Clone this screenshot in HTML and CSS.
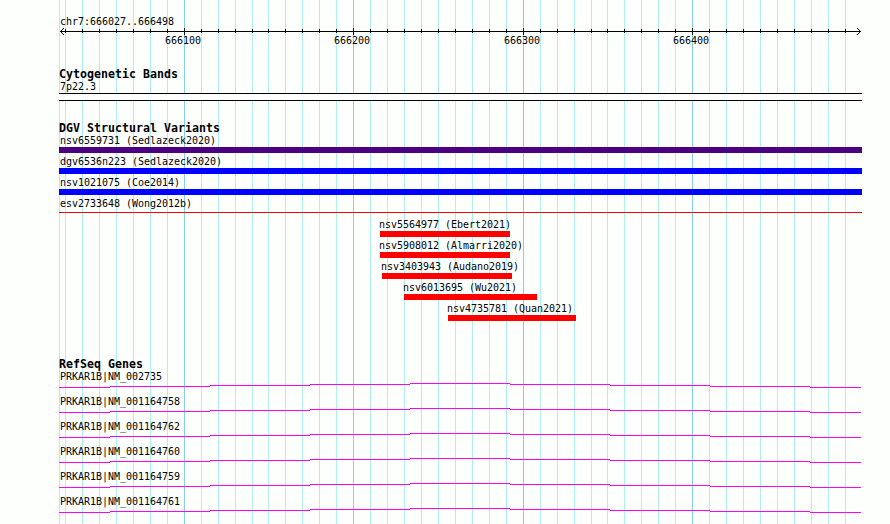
FILE: index.html
```
<!DOCTYPE html>
<html lang="en">
<head>
<meta charset="utf-8">
<title>chr7:666027..666498</title>
<link rel="stylesheet" href="styles.css">
</head>
<body>
<main class="browser">
  <svg class="grid" width="890" height="524" shape-rendering="crispEdges" aria-hidden="true">
    <path class="minor" d="M59.5 0V524M65.5 0V524M82.5 0V524M99.5 0V524M116.5 0V524M133.5 0V524M150.5 0V524M167.5 0V524M201.5 0V524M218.5 0V524M235.5 0V524M252.5 0V524M268.5 0V524M285.5 0V524M302.5 0V524M319.5 0V524M336.5 0V524M370.5 0V524M387.5 0V524M404.5 0V524M421.5 0V524M438.5 0V524M455.5 0V524M472.5 0V524M489.5 0V524M506.5 0V524M540.5 0V524M557.5 0V524M574.5 0V524M591.5 0V524M607.5 0V524M624.5 0V524M641.5 0V524M658.5 0V524M675.5 0V524M709.5 0V524M726.5 0V524M743.5 0V524M760.5 0V524M777.5 0V524M794.5 0V524M811.5 0V524M828.5 0V524M845.5 0V524"/>
    <path class="major" d="M184.5 0V524M353.5 0V524M523.5 0V524M692.5 0V524"/>
  </svg>

  <section class="ruler">
    <p class="label">chr7:666027..666498</p>
    <svg class="axis" width="803" height="7" shape-rendering="crispEdges" aria-hidden="true">
      <path d="M1 3.5H802M6.5 1V5M23.5 1V5M40.5 1V5M57.5 1V5M74.5 1V5M91.5 1V5M108.5 1V5M125.5 0V7M142.5 1V5M159.5 1V5M176.5 1V5M193.5 1V5M209.5 1V5M226.5 1V5M243.5 1V5M260.5 1V5M277.5 1V5M294.5 0V7M311.5 1V5M328.5 1V5M345.5 1V5M362.5 1V5M379.5 1V5M396.5 1V5M413.5 1V5M430.5 1V5M447.5 1V5M464.5 0V7M481.5 1V5M498.5 1V5M515.5 1V5M532.5 1V5M548.5 1V5M565.5 1V5M582.5 1V5M599.5 1V5M616.5 1V5M633.5 0V7M650.5 1V5M667.5 1V5M684.5 1V5M701.5 1V5M718.5 1V5M735.5 1V5M752.5 1V5M769.5 1V5M786.5 1V5"/>
      <path d="M1 3.5H2M2 2.5H3M3 1.5H4M4 0.5H5M2 4.5H3M3 5.5H4M4 6.5H5M801 3.5H802M800 2.5H801M799 1.5H800M798 0.5H799M800 4.5H801M799 5.5H800M798 6.5H799"/>
    </svg>
    <div class="scale"><span>666100</span><span>666200</span><span>666300</span><span>666400</span></div>
  </section>

  <section class="bands">
    <h2>Cytogenetic Bands</h2>
    <p class="label">7p22.3</p>
    <div class="band"></div>
  </section>

  <section class="variants">
    <h2>DGV Structural Variants</h2>
    <div class="variant indigo"><p class="label">nsv6559731 (Sedlazeck2020)</p><div class="bar"></div></div>
    <div class="variant blue"><p class="label">dgv6536n223 (Sedlazeck2020)</p><div class="bar"></div></div>
    <div class="variant blue"><p class="label">nsv1021075 (Coe2014)</p><div class="bar"></div></div>
    <div class="variant thin"><p class="label">esv2733648 (Wong2012b)</p><div class="bar"></div></div>
    <div class="variant inner" style="margin-left:321px;width:130px"><p class="label">nsv5564977 (Ebert2021)</p><div class="bar"></div></div>
    <div class="variant inner" style="margin-left:321px;width:130px"><p class="label">nsv5908012 (Almarri2020)</p><div class="bar"></div></div>
    <div class="variant inner" style="margin-left:323px;width:130px"><p class="label">nsv3403943 (Audano2019)</p><div class="bar"></div></div>
    <div class="variant inner" style="margin-left:345px;width:133px"><p class="label">nsv6013695 (Wu2021)</p><div class="bar"></div></div>
    <div class="variant inner" style="margin-left:389px;width:128px"><p class="label">nsv4735781 (Quan2021)</p><div class="bar"></div></div>
  </section>

  <section class="genes">
    <h2>RefSeq Genes</h2>
    <svg class="defs" width="0" height="0" aria-hidden="true"><defs><path id="intron" d="M0 4.5H51M51 3.5H151M151 2.5H251M251 1.5H351M351 0.5H451M451 1.5H551M551 2.5H651M651 3.5H751M751 4.5H802"/></defs></svg>
    <div class="gene"><p class="label">PRKAR1B|NM_002735</p><svg width="803" height="5"><use href="#intron"/></svg></div>
    <div class="gene"><p class="label">PRKAR1B|NM_001164758</p><svg width="803" height="5"><use href="#intron"/></svg></div>
    <div class="gene"><p class="label">PRKAR1B|NM_001164762</p><svg width="803" height="5"><use href="#intron"/></svg></div>
    <div class="gene"><p class="label">PRKAR1B|NM_001164760</p><svg width="803" height="5"><use href="#intron"/></svg></div>
    <div class="gene"><p class="label">PRKAR1B|NM_001164759</p><svg width="803" height="5"><use href="#intron"/></svg></div>
    <div class="gene"><p class="label">PRKAR1B|NM_001164761</p><svg width="803" height="5"><use href="#intron"/></svg></div>
  </section>
</main>
</body>
</html>
```
FILE: styles.css
```
* { box-sizing: border-box; }
body { margin: 0; background: #fdfffd; color: #000; font: 10px/12px "DejaVu Sans Mono", monospace; letter-spacing: -0.02px; }
p, h2 { margin: 0; white-space: nowrap; }
svg { display: block; fill: none; }
.browser { position: relative; width: 890px; height: 524px; padding: 15px 28px 0 59px; overflow: hidden; }
.grid { position: absolute; inset: 0; z-index: -1; }
.minor { stroke: #afeeee; }
.major { stroke: #87ceeb; }
.label { height: 12px; padding-left: 1px; line-height: 14px; }
h2 { height: 12px; font-size: 11.6px; line-height: 12px; font-weight: bold; letter-spacing: 0.016px; }

.ruler { height: 53px; }
.axis { margin-top: 1px; stroke: #000; }
.scale { display: grid; grid-template-columns: 169px 170px 169px auto; padding-left: 106px; }

.bands { height: 54px; }
.band { width: 803px; height: 8px; margin-top: 1px; border: solid #000; border-width: 1px 0; background: #fff; }

.variants { height: 236px; }
.variant { width: 803px; height: 21px; }
.inner .label { padding-left: 0; margin-left: -1px; }
.bar { height: 6px; margin-top: 1px; background: #f00; }
.indigo .bar { background: #4b0082; }
.blue .bar { background: #00f; }
.thin .bar { height: 1px; margin-top: 3px; }

.gene { height: 25px; }
.gene svg { margin-top: 1px; stroke: #f0f; shape-rendering: crispEdges; }
.defs { position: absolute; }
```
